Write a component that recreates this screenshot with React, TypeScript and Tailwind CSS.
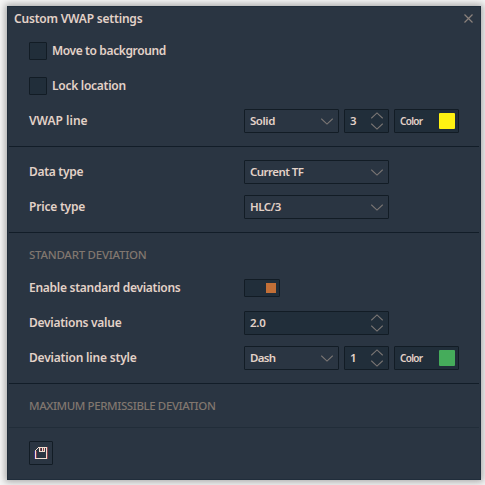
import type { ReactNode } from "react";

function Chevron({ up = false }: { up?: boolean }) {
  return (
    <svg width="12" height="7" viewBox="0 0 12 7" fill="none" stroke="#7b7674" strokeWidth="1.1" className="block">
      <path d={up ? "M0.3 6.3L6 0.9L11.7 6.3" : "M0.3 0.7L6 6.1L11.7 0.7"} />
    </svg>
  );
}

function Label({ children, className }: { children: ReactNode; className: string }) {
  return <span className={`-mt-px whitespace-nowrap ${className}`}>{children}</span>;
}

function Check({ children, className }: { children: ReactNode; className: string }) {
  return (
    <div className="flex h-[18px] items-center gap-[5px]">
      <span className="size-[18px] rounded-[1px] border border-[#121c25] bg-[#212e3a]" />
      <span className={`whitespace-nowrap ${className}`}>{children}</span>
    </div>
  );
}

function Row({ label, labelClass, children }: { label: string; labelClass: string; children: ReactNode }) {
  return (
    <div className="flex h-6 items-center">
      <div className="flex w-[215px]">
        <Label className={labelClass}>{label}</Label>
      </div>
      <div className="flex gap-[5px]">{children}</div>
    </div>
  );
}

const box = "flex h-6 items-center rounded-[1px] border border-[#121c25]";

function Select({ value, width, text }: { value: string; width: string; text: string }) {
  return (
    <div className={`${box} ${width} justify-between bg-[#2a3542] pl-[5px] pr-[5px]`}>
      <span className={`text-[11.5px] ${text}`}>{value}</span>
      <Chevron />
    </div>
  );
}

function Spinner({ value, width }: { value: string; width: string }) {
  return (
    <div className={`${box} ${width} justify-between bg-[#212e3a] pl-[5px] pr-[5px]`}>
      <span className="text-[11.5px] tracking-[-0.3px]">{value}</span>
      <span className="flex flex-col gap-[4px]">
        <Chevron up />
        <Chevron />
      </span>
    </div>
  );
}

function ColorBox({ swatch }: { swatch: string }) {
  return (
    <div className={`${box} w-[65px] justify-between bg-[#212e3a] pl-[5px] pr-[3px]`}>
      <span className="text-[10px] tracking-[-0.7px]">Color</span>
      <span className={`size-4 rounded-[1px] ${swatch}`} />
    </div>
  );
}

export default function App() {
  return (
    <div className="h-[485px] w-[485px] overflow-hidden bg-[#f6f6f6] pl-[7px] pt-[6px] font-['Noto_Sans',sans-serif] text-[12px] font-semibold leading-4 text-[#e3d2c8]">
      <div className="flex h-[474px] w-[474px] flex-col border border-[#202d3b] bg-[#2a3542] px-px shadow-[0_0_7px_2px_#a9a9a9]">
        <header className="flex h-[23px] shrink-0 items-center justify-between pl-[5px] pr-[6px]">
          <h1 className="text-[12px] tracking-[-0.2px]">Custom VWAP settings</h1>
          <svg width="9" height="9" viewBox="0 0 9 9" stroke="#8a817c" strokeWidth="1.2">
            <path d="M0.5 0.5L8.5 8.5M8.5 0.5L0.5 8.5" />
          </svg>
        </header>

        <section className="h-[117px] shrink-0 border-b border-[#121d28] pl-5 pt-3">
          <Check className="tracking-[-0.38px]">Move to background</Check>
          <div className="h-[17px]" />
          <Check className="tracking-[-0.27px]">Lock location</Check>
          <div className="h-[14px]" />
          <Row label="VWAP line" labelClass="tracking-[0px]">
            <Select value="Solid" width="w-[95px]" text="tracking-[-0.45px]" />
            <Spinner value="3" width="w-[45px]" />
            <ColorBox swatch="bg-[#fff212]" />
          </Row>
        </section>

        <section className="flex h-[86px] shrink-0 flex-col gap-[11px] border-b border-[#121d28] pl-5 pt-[13px]">
          <Row label="Data type" labelClass="tracking-[-0.3px]">
            <Select value="Current TF" width="w-[145px]" text="tracking-[-0.55px]" />
          </Row>
          <Row label="Price type" labelClass="tracking-[-0.2px]">
            <Select value="HLC/3" width="w-[145px]" text="tracking-[-0.5px]" />
          </Row>
        </section>

        <section className="flex h-[151px] shrink-0 flex-col gap-[11px] border-b border-[#121d28] pl-5 pt-[14px]">
          <h2 className="mb-[2px] h-4 text-[11.5px] font-medium tracking-[-0.25px] text-[#81776f]">STANDART DEVIATION</h2>
          <div className="flex h-6 items-center">
            <div className="flex w-[215px]">
              <Label className="tracking-[-0.27px]">Enable standard deviations</Label>
            </div>
            <span className="flex h-[18px] w-9 items-center justify-end rounded-[1px] border border-[#121c25] bg-[#212e3a] pr-[3px]">
              <span className="size-[10px] bg-[#c26f37]" />
            </span>
          </div>
          <Row label="Deviations value" labelClass="tracking-[-0.26px]">
            <Spinner value="2.0" width="w-[145px]" />
          </Row>
          <Row label="Deviation line style" labelClass="tracking-[-0.19px]">
            <Select value="Dash" width="w-[95px]" text="tracking-[-0.65px]" />
            <Spinner value="1" width="w-[45px]" />
            <ColorBox swatch="bg-[#45ac5b]" />
          </Row>
        </section>

        <section className="h-11 shrink-0 border-b border-[#212d39] pl-5 pt-[14px]">
          <h2 className="text-[11.5px] font-medium tracking-[-0.4px] text-[#81776f]">MAXIMUM PERMISSIBLE DEVIATION</h2>
        </section>

        <footer className="pl-5 pt-[13px]">
          <button className="flex size-6 items-center justify-center rounded-[1px] border border-[#121c25]">
            <svg width="14" height="14" viewBox="0 0 14 14" fill="none" shapeRendering="crispEdges">
              <path d="M0.5 5V13" stroke="#34358c" />
              <path d="M2.5 5V12M13.5 1V13" stroke="#8a3f4a" />
              <path d="M1.5 12.5V4.5L4.5 1.5H12.5V12.5Z" stroke="#f0ddd0" />
              <path d="M5.5 2V5.5H10.5V2M8.5 2V5" stroke="#f0ddd0" />
              <path d="M6.5 2V5M9.5 2V5" stroke="#8a3f4a" />
            </svg>
          </button>
        </footer>
      </div>
    </div>
  );
}
